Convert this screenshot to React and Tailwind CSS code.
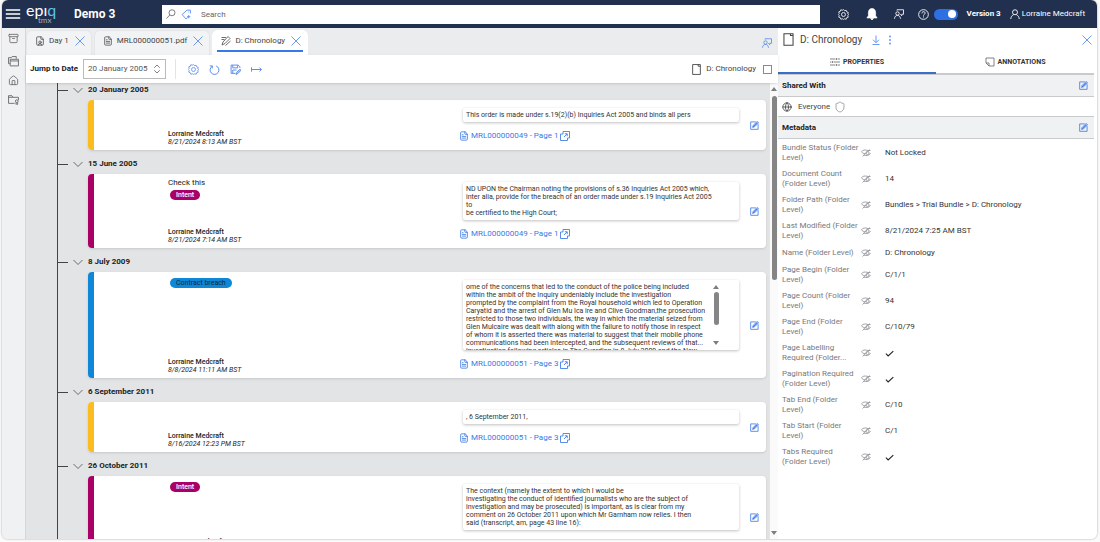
import React, { useState } from "react";
import { Archive, ChevronsUpDown, FileText, FileUser, Globe, House, Shield } from "lucide-react";

const ENTRIES = [
  {
    date: "20 January 2005",
    bar: "bg-[#fbbc1f]",
    author: "Lorraine Medcraft",
    time: "8/21/2024 8:13 AM BST",
    lines: ["This order is made under s.19(2)(b) Inquiries Act 2005 and binds all pers"],
    link: "MRL000000049 - Page 1",
  },
  {
    date: "15 June 2005",
    bar: "bg-[#a90065]",
    note: "Check this",
    tag: { label: "Intent", style: "bg-[#a90065] font-medium text-white" },
    author: "Lorraine Medcraft",
    time: "8/21/2024 7:14 AM BST",
    lines: [
      "ND UPON the Chairman noting the provisions of s.36 Inquiries Act 2005 which,",
      "inter alia, provide for the breach of an order made under s.19 Inquiries Act 2005",
      "to",
      "be certified to the High Court;",
    ],
    link: "MRL000000049 - Page 1",
  },
  {
    date: "8 July 2009",
    bar: "bg-[#0e87d8]",
    tag: { label: "Contract breach", style: "bg-[#0e87d8] text-[#10243c]" },
    author: "Lorraine Medcraft",
    time: "8/8/2024 11:11 AM BST",
    scroll: true,
    lines: [
      "ome of the concerns that led to the conduct of the police being included",
      "within the ambit of the Inquiry undeniably include the investigation",
      "prompted by the complaint from the Royal household which led to Operation",
      "Caryatid and the arrest of Glen Mu Ica ire and Clive Goodman,the prosecution",
      "restricted to those two individuals, the way in which the material seized from",
      "Glen Mulcaire was dealt with along with the failure to notify those in respect",
      "of whom it is asserted there was material to suggest that their mobile phone",
      "communications had been intercepted, and the subsequent reviews of that...",
      "investigation following articles in The Guardian in 8 July 2009 and the New",
    ],
    link: "MRL000000051 - Page 3",
  },
  {
    date: "6 September 2011",
    bar: "bg-[#fbbc1f]",
    author: "Lorraine Medcraft",
    time: "8/16/2024 12:23 PM BST",
    lines: [", 6 September 2011,"],
    link: "MRL000000051 - Page 3",
  },
  {
    date: "26 October 2011",
    bar: "bg-[#a90065]",
    tag: { label: "Intent", style: "bg-[#a90065] font-medium text-white" },
    author: "Lorraine Medcraft",
    time: "8/16/2024 12:25 PM BST",
    lines: [
      "The context (namely the extent to which I would be",
      "investigating the conduct of identified journalists who are the subject of",
      "investigation and may be prosecuted) is important, as is clear from my",
      "comment on 26 October 2011 upon which Mr Garnham now relies. I then",
      "said (transcript, am, page 43 line 16):",
    ],
    link: "MRL000000051 - Page 3",
  },
];

const METADATA = [
  { label: ["Bundle Status (Folder", "Level)"], value: "Not Locked" },
  { label: ["Document Count", "(Folder Level)"], value: "14" },
  { label: ["Folder Path (Folder", "Level)"], value: "Bundles > Trial Bundle > D: Chronology" },
  { label: ["Last Modified (Folder", "Level)"], value: "8/21/2024 7:25 AM BST" },
  { label: ["Name (Folder Level)"], value: "D: Chronology" },
  { label: ["Page Begin (Folder", "Level)"], value: "C/1/1" },
  { label: ["Page Count (Folder", "Level)"], value: "94" },
  { label: ["Page End (Folder", "Level)"], value: "C/10/79" },
  { label: ["Page Labelling", "Required (Folder..."], checked: true },
  { label: ["Pagination Required", "(Folder Level)"], checked: true },
  { label: ["Tab End (Folder", "Level)"], value: "C/10" },
  { label: ["Tab Start (Folder", "Level)"], value: "C/1" },
  { label: ["Tabs Required", "(Folder Level)"], checked: true },
];

const Icon = ({ size = 10, box = 20, width = 1.5, className = "", children }) => (
  <svg
    width={size}
    height={size}
    viewBox={`0 0 ${box} ${box}`}
    fill="none"
    stroke="currentColor"
    strokeWidth={width}
    className={`shrink-0 ${className}`}
    aria-hidden="true"
  >
    {children}
  </svg>
);

const CloseIcon = ({ size = 10 }) => (
  <Icon size={size} width={1.8}>
    <path d="M1 1L19 19M19 1L1 19" />
  </Icon>
);

const GearIcon = ({ size = 11 }) => (
  <Icon size={size} width={1.5}>
    <path d="M10 1l2 2.2 2.9-.8.9 2.8 2.8.9-.8 2.9L19.500 10l-1.700 2 .8 2.900-2.800.900-.9 2.800-2.900-.8L10 19l-2-1.200-2.900.8-.9-2.800-2.800-.9.8-2.900L.5 10l1.700-2-.8-2.900 2.800-.9.9-2.800 2.900.8z" />
    <circle cx="10" cy="10" r="3.600" />
  </Icon>
);

const PersonChatIcon = ({ size = 10 }) => (
  <Icon size={size} width={1.7}>
    <circle cx="7" cy="9" r="3.4" />
    <path d="M1 19.5c.5-4.500 2.600-6.600 6-6.600s5.500 2.100 6 6.600" />
    <path d="M6 3V1.500h13v9h-3.500v3L12.500 10.500" />
  </Icon>
);

const UserIcon = () => (
  <Icon size={10} width={1.8}>
    <circle cx="10" cy="6.500" r="5" />
    <path d="M1.500 20c.5-4.500 2.500-7 5.500-8.500M18.500 20c-.5-4.500-2.500-7-5.500-8.500" />
  </Icon>
);

const EditIcon = () => (
  <Icon size={9} width={1.8}>
    <path d="M13 2H1.500v16.500H18V7" />
    <path d="M6 14l1-4L16 1l3 3-9 9z" fill="#b9d0fb" />
    <path d="M6 14l10-10" />
  </Icon>
);

const PageIcon = ({ size = 11 }) => (
  <Icon size={size} width={1.6}>
    <path d="M3 1h14v18H3zM13 1v3h4" />
  </Icon>
);

const OpenIcon = () => (
  <Icon size={10} width={1.7}>
    <path d="M6 1h13v13H15M15 14v5H1V6h5M6 1v5" />
    <path d="M8 12l6-6M9.500 5.500H14.500V10.500" />
  </Icon>
);

const HiddenIcon = () => (
  <Icon size={10} width={1.6} className="text-[#8d9095]">
    <path d="M1 7.500C3 4 8 3 14 5H19M1 7.500c1.500 3 5 4 7 3.500M19 10c-1.500 5-8 6.500-14 4M18 3L3 17" />
    <circle cx="13" cy="10" r="3.200" />
  </Icon>
);

const Check = () => (
  <Icon size={9} width={2.4} className="text-[#222]">
    <path d="M2 10.500l5 5L18.500 4.500" />
  </Icon>
);

const UpArrow = () => (
  <svg width="6" height="4" viewBox="0 0 6 4" className="shrink-0" aria-hidden="true">
    <path d="M3 0l3 4H0z" fill="#7d7d7d" />
  </svg>
);

const DownArrow = () => (
  <svg width="6" height="4" viewBox="0 0 6 4" className="shrink-0" aria-hidden="true">
    <path d="M3 4l3-4H0z" fill="#7d7d7d" />
  </svg>
);

const Header = () => {
  const [enabled, setEnabled] = useState(true);

  return (
    <header className="flex h-7 shrink-0 items-center rounded-t bg-[#22304f] pr-3 pl-[3px] text-white">
      <button aria-label="Menu">
        <Icon size={16} width={1.6}>
          <path d="M1 5h18M1 10h18M1 15h18" />
        </Icon>
      </button>
      <div className="ml-[5px] flex w-12 flex-col pb-[2px] font-['Lato']">
        <span className="text-[16px] leading-[15px]">
          ep&#305;<span className="text-[#5fc4e8]">q</span>
        </span>
        <span className="pl-3 text-[8px] leading-[7px] text-[#a4abb9]">tmx</span>
      </div>
      <h1 className="w-[88px] text-[12px] leading-4 font-bold">Demo 3</h1>

      <div className="flex h-[19px] flex-1 items-center bg-white px-1 text-[#555]">
        <Icon size={10} width={1.5}>
          <circle cx="12" cy="7.500" r="6" />
          <path d="M7.500 12L1 19" />
        </Icon>
        <Icon size={11} width={1.7} className="ml-[5px] text-[#5b8def]">
          <path d="M17 8V2h-6L2 10l7 8 3-2.500M14 11v6M11 14h6M13.500 5.500h1" />
        </Icon>
        <input
          type="text"
          aria-label="Search"
          placeholder="Search"
          className="ml-[9px] h-4 min-w-0 flex-1 text-[8px] outline-none placeholder:text-[#666]"
        />
      </div>

      <nav className="ml-[18px] flex items-center">
        <button aria-label="Settings" className="w-7">
          <GearIcon />
        </button>
        <button aria-label="Notifications" className="w-7">
          <Icon size={12} width={1.2}>
            <path
              d="M10 1c4.500 0 6 3.500 6 7v5l2.500 3.500h-17L4 13V8c0-3.500 1.500-7 6-7zM7.500 17.500h5L10 20z"
              fill="currentColor"
            />
          </Icon>
        </button>
        <button aria-label="Share" className="w-6">
          <PersonChatIcon />
        </button>
        <button aria-label="Help" className="w-4">
          <Icon size={11} width={1.6}>
            <circle cx="10" cy="10" r="8.800" />
            <path d="M7 8c0-4 6-4 6-.5 0 2-3 2-3 4.500M10 13.500v2" />
          </Icon>
        </button>
        <label className="flex h-[11px] w-6 items-center justify-end rounded-full bg-[#2f6fe4] px-[2px] has-[:not(:checked)]:justify-start">
          <input
            type="checkbox"
            checked={enabled}
            onChange={() => setEnabled(!enabled)}
            aria-label="Version toggle"
            className="h-2 w-2 appearance-none rounded-full bg-white"
          />
        </label>
        <span className="ml-[9px] text-[8px] leading-3 font-bold">Version 3</span>
        <button className="ml-[9px] flex items-center gap-[2px] text-[8px] leading-3">
          <UserIcon />
          Lorraine Medcraft
        </button>
      </nav>
    </header>
  );
};

const Sidebar = () => (
  <aside className="flex w-6 shrink-0 flex-col items-center border-r border-[#d4d6d9] bg-[#f0f1f3] pt-[5px] text-[#666]">
    <button aria-label="Archive" className="mb-3">
      <Archive size={11} strokeWidth={1.8} />
    </button>
    <button aria-label="Tabs" className="mb-2">
      <Icon size={11} width={1.6}>
        <path d="M4 14H1V3h5l1.500-2H15v4M4 6h15v12H4zM4 9h15" />
      </Icon>
    </button>
    <button aria-label="Home" className="mb-2">
      <House size={11} strokeWidth={1.8} />
    </button>
    <button aria-label="Folders">
      <Icon size={11} width={1.6}>
        <path d="M12 17H1V3h6l2 3h10v5M1 6h8" />
        <circle cx="16" cy="13" r="2.500" />
        <path d="M14.500 15.500V19l1.500-1 1.500 1v-3.500" />
      </Icon>
    </button>
  </aside>
);

const Tab = ({ icon, label, active }) => (
  <div
    className={`flex items-start rounded-t-md border-x border-t px-1 ${
      active ? "border-white bg-white" : "border-[#e4e6e8] bg-[#f2f3f4]"
    }`}
  >
    <div
      className={`flex h-[21px] items-center border-b-2 pt-px pr-[2px] pl-1 text-[#555] ${
        active ? "border-[#3b78e7]" : "border-transparent"
      }`}
    >
      {icon}
      <button className="ml-1 text-[8px] leading-3 text-[#444]">{label}</button>
      <button aria-label={`Close ${label}`} className="ml-[6px] text-[#5b8def]">
        <CloseIcon />
      </button>
    </div>
  </div>
);

const Toolbar = () => (
  <div className="z-10 flex h-7 shrink-0 items-center bg-white pr-[6px] pl-1 shadow-sm">
    <label htmlFor="jump" className="text-[8px] leading-3 font-bold text-[#222]">
      Jump to Date
    </label>
    <div className="relative ml-[5px]">
      <select
        id="jump"
        className="block h-5 w-[83px] appearance-none border border-[#bbb] bg-white pl-1 text-[8px] text-[#555]"
      >
        {ENTRIES.map((entry) => (
          <option key={entry.date}>{entry.date}</option>
        ))}
      </select>
      <ChevronsUpDown
        size={12}
        strokeWidth={1.5}
        className="pointer-events-none absolute top-1 right-[3px] text-[#555]"
      />
    </div>
    <div className="ml-[9px] flex h-5 items-center gap-[10px] border-l border-[#e3e4e6] pl-3 text-[#5b8def]">
      <button aria-label="Settings">
        <GearIcon />
      </button>
      <button aria-label="Refresh">
        <Icon size={11} width={1.8}>
          <path d="M13 3.500a8 8 0 1 1-7 .5M6 8V3.500H1.500" />
        </Icon>
      </button>
      <button aria-label="Save">
        <Icon size={11} width={1.8}>
          <path d="M18 7V5l-3-3H2v15h8M5 2v5h9V2M5 17v-6h7" />
          <path d="M11 19l1-3.500 6-6 2 2-6 6z" fill="#b9d0fb" />
        </Icon>
      </button>
      <button aria-label="Expand">
        <Icon size={11} width={1.8}>
          <path d="M1 6v8M1 10h18M15.500 6.500L19 10l-3.500 3.500" />
        </Icon>
      </button>
    </div>
    <label className="ml-auto flex items-center text-[8px] leading-3 text-[#444]">
      <PageIcon size={11} />
      <span className="ml-1">D: Chronology</span>
      <input
        type="checkbox"
        className="ml-[7px] h-[9px] w-[9px] appearance-none border border-[#5b8def] bg-white checked:bg-[#5b8def]"
      />
    </label>
  </div>
);

const Entry = ({ entry }) => (
  <section>
    <h2 className="flex h-6 items-center pt-1 text-[8px] leading-3 font-bold text-[#222]">
      <span className="w-[10px] border-t border-[#444]" />
      <Icon size={10} width={1.5} className="ml-[5px] text-[#444]">
        <path d="M1 6l9 9 9-9" />
      </Icon>
      <span className="ml-[5px]">{entry.date}</span>
    </h2>
    <article className="ml-[30px] flex overflow-hidden rounded bg-white shadow">
      <div className={`w-[6px] shrink-0 ${entry.bar}`} />
      <div className="flex min-w-0 flex-1 flex-col py-1 pl-[74px] text-[#222]">
        {entry.note && <p className="text-[8px] leading-[10px]">{entry.note}</p>}
        {entry.tag && (
          <span
            className={`mt-[2px] ml-[2px] self-start rounded-full px-[6px] text-[7px] leading-[10px] ${entry.tag.style}`}
          >
            {entry.tag.label}
          </span>
        )}
        <div className="mt-auto text-[7px] leading-2">
          <p className="font-medium">{entry.author}</p>
          <p className="italic">{entry.time}</p>
        </div>
      </div>
      <div className="w-[280px] shrink-0 pt-2 pb-[7px]">
        <div
          className={`ml-1 flex rounded-xs p-[3px] text-[7px] leading-2 text-[#333] shadow-[0_1px_3px_rgba(0,0,0,0.25)] ${
            entry.scroll ? "h-[70px] overflow-hidden" : ""
          }`}
        >
          <div className="min-w-0 flex-1 whitespace-nowrap">
            {entry.lines.map((line) => (
              <p key={line}>{line}</p>
            ))}
          </div>
          {entry.scroll && (
            <div className="mr-[17px] flex h-16 flex-col items-center py-[2px]">
              <UpArrow />
              <div className="my-[3px] h-[33px] w-[5px] rounded-full bg-[#858585]" />
              <div className="mt-auto">
                <DownArrow />
              </div>
            </div>
          )}
        </div>
        <div className="mt-[7px] flex h-[14px] items-center text-[#3b78e7]">
          <FileText size={10} strokeWidth={2} />
          <a href="#doc" className="ml-[2px] text-[8px] leading-3">
            {entry.link}
          </a>
          <button aria-label="Open in new window" className="ml-[2px]">
            <OpenIcon />
          </button>
        </div>
      </div>
      <button aria-label="Edit entry" className="mr-[7px] ml-[11px] self-center text-[#3b78e7]">
        <EditIcon />
      </button>
    </article>
  </section>
);

const Timeline = () => (
  <div className="flex min-h-0 flex-1 bg-[#e3e4e6]">
    <div className="min-w-0 flex-1 overflow-hidden pr-1 pl-[31px]">
      <div className="-mt-[7px] border-l border-[#444]">
        {ENTRIES.map((entry) => (
          <Entry key={entry.date} entry={entry} />
        ))}
      </div>
    </div>
    <div className="flex w-2 flex-col items-center bg-[#fafafa] py-1">
      <UpArrow />
      <div className="mt-[5px] h-[184px] w-[5px] rounded-full bg-[#858585]" />
      <div className="mt-auto">
        <DownArrow />
      </div>
    </div>
  </div>
);

const SectionBar = ({ title }) => (
  <div className="flex h-[23px] items-center justify-between border-y border-[#c8cacd] bg-[#f0f1f3] pr-[6px] pl-1">
    <h3 className="text-[8px] leading-3 font-bold text-[#222]">{title}</h3>
    <button aria-label={`Edit ${title}`} className="text-[#3b78e7]">
      <EditIcon />
    </button>
  </div>
);

const PropertiesPanel = () => (
  <aside className="w-[319px] shrink-0 bg-white pr-[3px]">
    <div className="flex h-[23px] items-center pl-1 text-[#444]">
      <PageIcon size={13} />
      <h2 className="ml-[5px] text-[10px] leading-4">D: Chronology</h2>
      <button aria-label="Download" className="ml-[9px] text-[#5b8def]">
        <Icon size={10} width={1.8}>
          <path d="M10 1v14M4 9.500l6 6 6-6M3 19h14" />
        </Icon>
      </button>
      <button aria-label="More" className="ml-1 text-[#5b8def]">
        <Icon size={10} width={0}>
          <g fill="currentColor">
            <circle cx="10" cy="3" r="1.800" />
            <circle cx="10" cy="10" r="1.800" />
            <circle cx="10" cy="17" r="1.800" />
          </g>
        </Icon>
      </button>
      <button aria-label="Close panel" className="mr-[2px] ml-auto text-[#5b8def]">
        <CloseIcon />
      </button>
    </div>
    <div className="grid h-[23px] grid-cols-2 text-[7px] leading-3 font-bold text-[#333]">
      <button className="flex items-center justify-center gap-[3px] border-b-2 border-[#3a6cc8]">
        <Icon size={10} width={1.6} className="text-[#666]">
          <path d="M0 4h11M15 4h5M0 10h3M7 10h13M0 16h11M15 16h5M13 2v4M5 8v4M13 14v4" />
        </Icon>
        PROPERTIES
      </button>
      <button className="flex items-center justify-center gap-[3px] border-b border-[#c8cacd]">
        <Icon size={10} width={1.6} className="text-[#666]">
          <path d="M2 2h16v16H8l-6-6zM8 18v-6H2" />
        </Icon>
        ANNOTATIONS
      </button>
    </div>
    <SectionBar title="Shared With" />
    <div className="flex h-[19px] items-center pl-1 text-[8px] leading-3 text-[#444]">
      <Globe size={10} strokeWidth={2} />
      <span className="ml-[6px]">Everyone</span>
      <Shield size={12} strokeWidth={1.5} className="ml-1 text-[#888]" />
    </div>
    <SectionBar title="Metadata" />
    <dl className="pt-px text-[8px]">
      {METADATA.map((row) => (
        <div
          key={row.label.join(" ")}
          className={`flex items-center pl-1 ${row.label.length > 1 ? "h-[26px]" : "h-[18px]"}`}
        >
          <dt className="w-[79px] shrink-0 leading-[10px] whitespace-nowrap text-[#77797d]">
            {row.label.map((line) => (
              <span key={line} className="block">
                {line}
              </span>
            ))}
          </dt>
          <HiddenIcon />
          <dd className="ml-[14px] leading-3 text-[#333]">
            {row.checked ? <Check /> : row.value}
          </dd>
        </div>
      ))}
    </dl>
  </aside>
);

const App = () => (
  <div className="h-screen bg-[#fafafa] pr-[3px] pb-[3px] pl-[2px] font-['Roboto',sans-serif]">
    <div className="flex h-full flex-col overflow-hidden rounded-md shadow-[0_0_2px_rgba(0,0,0,0.4)]">
      <Header />
      <div className="flex min-h-0 flex-1">
        <Sidebar />
        <main className="flex min-w-0 flex-1 flex-col">
          <div className="flex h-[27px] shrink-0 gap-[2px] bg-[#ebecee] pt-[2px]">
            <Tab icon={<FileUser size={10} strokeWidth={2} />} label="Day 1" />
            <Tab icon={<FileText size={10} strokeWidth={2} />} label="MRL000000051.pdf" />
            <Tab
              active
              icon={
                <Icon size={10} width={1.7}>
                  <path d="M2 18l2-6L14 1l4 4L8 15zM1 3h9M1 7h6M9 19l10-9" />
                </Icon>
              }
              label="D: Chronology"
            />
            <button aria-label="Collaborate" className="mr-[6px] ml-auto text-[#5b8def]">
              <PersonChatIcon />
            </button>
          </div>
          <Toolbar />
          <Timeline />
        </main>
        <PropertiesPanel />
      </div>
    </div>
  </div>
);

export default App;
